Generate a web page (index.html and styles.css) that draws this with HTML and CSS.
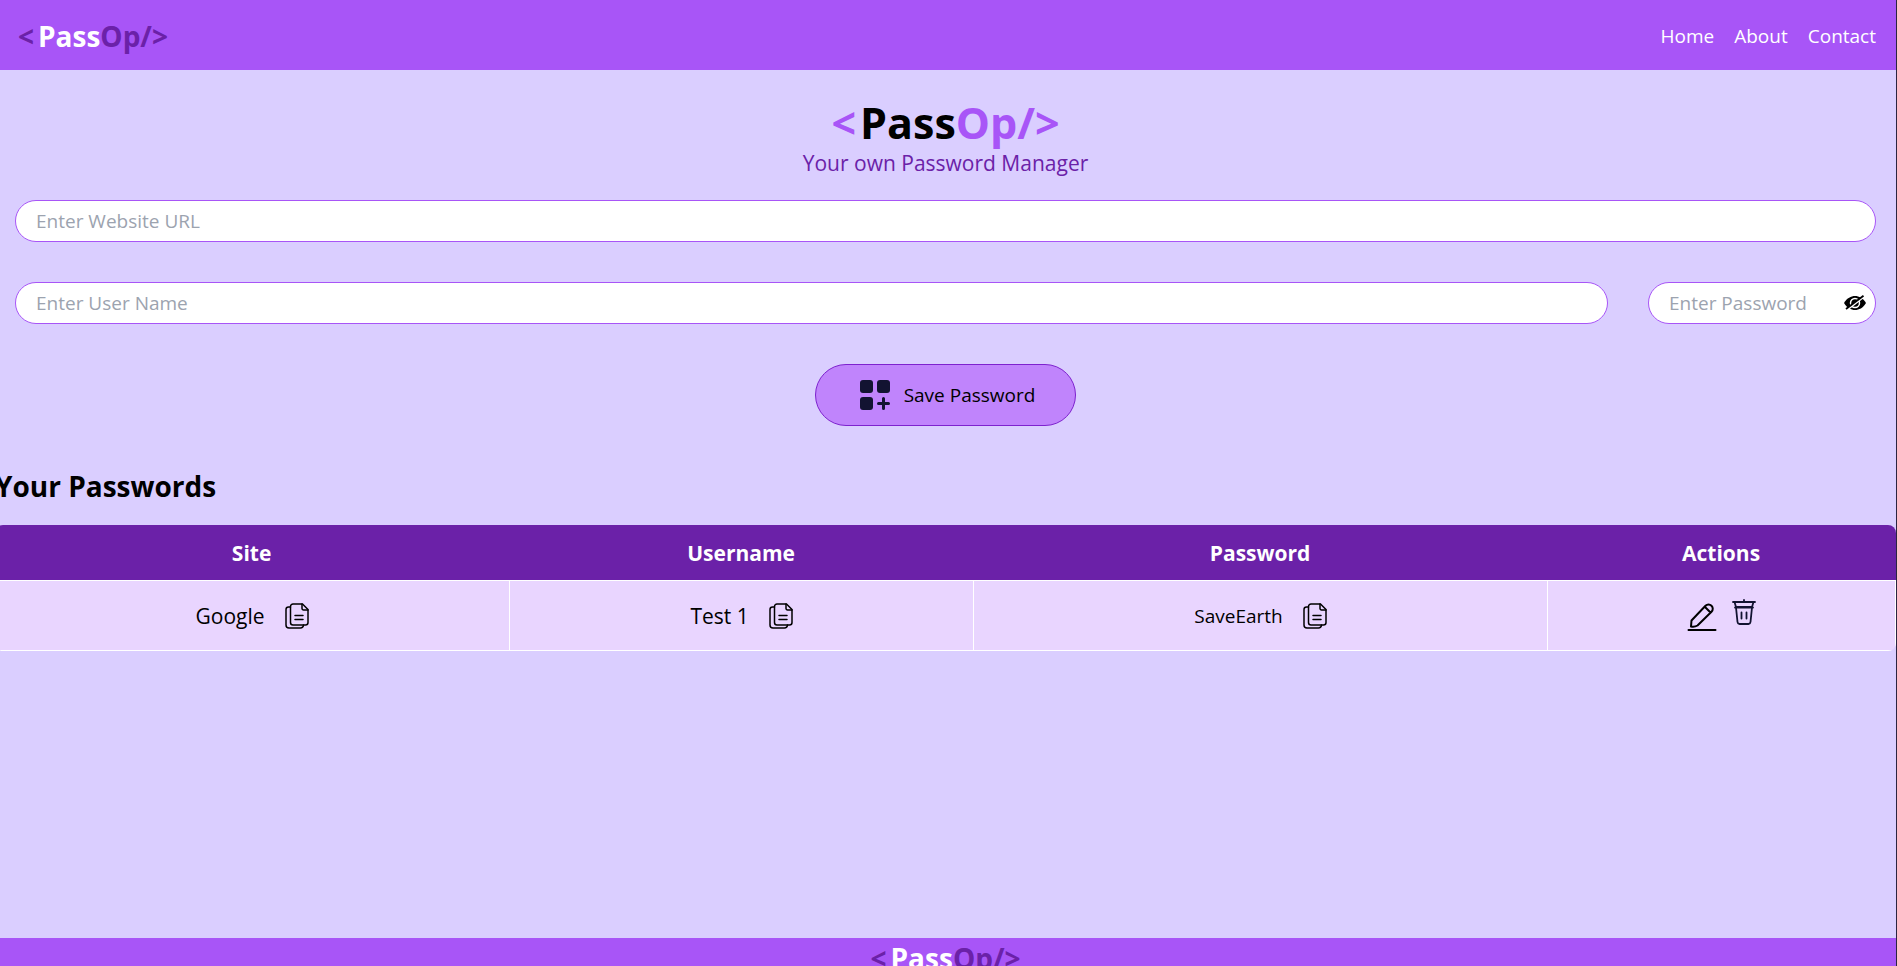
FILE: index.html
```html
<!DOCTYPE html>
<html lang="en">
<head>
<meta charset="utf-8">
<title>PassOp</title>
<link rel="stylesheet" href="styles.css">
</head>
<body>
<svg class="sprite" aria-hidden="true">
  <symbol id="copy" viewBox="0 0 24 26">
    <g fill="none" stroke="currentColor" stroke-width="1.5" stroke-linejoin="round" stroke-linecap="round">
      <path d="M8 1h9.500l5.500 5.500v13a2.500 2.500 0 0 1-2.500 2.500H8a2.500 2.500 0 0 1-2.500-2.500v-16A2.500 2.500 0 0 1 8 1z"/>
      <path d="M17 1v4.500a1.500 1.500 0 0 0 1.500 1.500H23M5.500 4H3.500A2.500 2.500 0 0 0 1 6.500V22a3 3 0 0 0 3 3h11.500a3 3 0 0 0 3-3M10 12.500h8M10 16.500h8"/>
    </g>
  </symbol>
</svg>
<div class="page">
  <nav class="navbar">
    <div class="logo"><span class="deep">&lt;</span><span class="name">Pass</span><span class="deep">Op/&gt;</span></div>
    <ul class="links">
      <li><a href="#">Home</a></li>
      <li><a href="#">About</a></li>
      <li><a href="#">Contact</a></li>
    </ul>
  </nav>
  <main class="main">
    <header class="hero">
      <h1 class="title"><span class="accent">&lt;</span><span class="name">Pass</span><span class="accent">Op/&gt;</span></h1>
      <p class="tagline">Your own Password Manager</p>
    </header>
    <form class="form">
      <input class="field" type="text" placeholder="Enter Website URL" aria-label="Website URL">
      <div class="row">
        <input class="field" type="text" placeholder="Enter User Name" aria-label="User name">
        <div class="secret">
          <input class="field" type="password" placeholder="Enter Password" aria-label="Password">
          <button class="eye" type="button" aria-label="Show password">
            <svg width="22" height="16" viewBox="0 0 22 16"><path d="M0 8C3 3 7 1 11 1s8 2 11 7c-3 5-7 7-11 7S3 13 0 8z"/><circle cx="11" cy="8" r="4.500" fill="none" stroke="#fff" stroke-width="1.500"/><path d="M2 15.500 19.500 2" stroke="#fff" stroke-width="2.200"/><path d="M2 14 19.500 0.800" stroke="#000" stroke-width="1.800"/></svg>
          </button>
        </div>
      </div>
      <button class="save" type="button">
        <svg width="30" height="30" viewBox="0 0 30 30" fill="#121331"><rect width="13" height="13" rx="3"/><rect x="17" width="13" height="13" rx="3"/><rect y="17" width="13" height="13" rx="3"/><path d="M23.500 18.500v10M18.500 23.500h10" stroke="#121331" stroke-width="3" stroke-linecap="round"/></svg>
        Save Password
      </button>
    </form>
    <section>
      <h2 class="heading">Your Passwords</h2>
      <table class="table">
        <colgroup><col class="c-site"><col class="c-user"><col class="c-pass"><col class="c-act"></colgroup>
        <thead><tr><th>Site</th><th>Username</th><th>Password</th><th>Actions</th></tr></thead>
        <tbody><tr>
          <td><div class="cell"><a href="#">Google</a><button type="button" aria-label="Copy site"><svg width="24" height="26"><use href="#copy"/></svg></button></div></td>
          <td><div class="cell"><span>Test 1</span><button type="button" aria-label="Copy username"><svg width="24" height="26"><use href="#copy"/></svg></button></div></td>
          <td><div class="cell small"><span>SaveEarth</span><button type="button" aria-label="Copy password"><svg width="24" height="26"><use href="#copy"/></svg></button></div></td>
          <td><div class="cell actions">
            <button type="button" aria-label="Edit"><svg width="30" height="34" viewBox="0 0 30 34" fill="none" stroke="#000" stroke-width="2" stroke-linecap="round" stroke-linejoin="round"><path d="M4 27.500l.5-6L18.500 6.800a4.200 4.200 0 0 1 6 0 4.200 4.200 0 0 1 0 6L10.500 26.500q-3 1.800-6.500 1z M18 8l5.500 5.500M1.500 31h27"/></svg></button>
            <button type="button" aria-label="Delete"><svg width="24" height="34" viewBox="0 0 24 34" fill="none" stroke="#121331" stroke-width="1.800" stroke-linecap="round" stroke-linejoin="round"><path d="M1 3h22M12 .9v2M2.500 3l1.500 5h16l1.500-5M3 8.500h18M4 8.500l1.500 14.500a2.200 2.200 0 0 0 2 2h9a2.200 2.200 0 0 0 2-2L20 8.500M9.500 13.500v6M14.500 13.500v6"/></svg></button>
          </div></td>
        </tr></tbody>
      </table>
    </section>
  </main>
  <footer class="footer">
    <div class="logo"><span class="deep">&lt;</span><span class="name">Pass</span><span class="deep">Op/&gt;</span></div>
  </footer>
</div>
</body>
</html>
```
FILE: styles.css
```css
* { box-sizing: border-box; }
html { background: #daceff; }
body {
  margin: 0;
  height: 100vh;
  overflow: hidden;
  font-family: "Open Sans", "Noto Sans", sans-serif;
  font-size: 19px;
  line-height: 30px;
  color: #000;
}
.sprite { display: none; }
h1, h2, p, ul { margin: 0; padding: 0; }
button {
  margin: 0;
  padding: 0;
  border: 0;
  background: none;
  font: inherit;
  color: inherit;
  cursor: pointer;
}
svg { display: block; }
a { color: inherit; text-decoration: none; }
.page { margin-left: -5px; border-right: 1px solid #2b2440; }
.navbar {
  display: flex;
  justify-content: space-between;
  align-items: center;
  height: 70px;
  padding: 2px 20px 0 23px;
  background: #a855f7;
  color: #fff;
}
.logo {
  display: flex;
  font-size: 28px;
  line-height: 40px;
  font-weight: 700;
  color: #fff;
}
.name { margin-left: 4px; }
.deep { color: #6b21a8; }
.accent { color: #a855f7; }
.links { display: flex; gap: 20px; list-style: none; }
.main { min-height: calc(100vh - 97px - 1px); }
.hero { padding-top: 28px; text-align: center; }
.title {
  display: flex;
  justify-content: center;
  font-size: 43px;
  line-height: 50px;
  font-weight: 700;
}
.tagline { font-size: 21px; line-height: 30px; color: #6b21a8; }
.form {
  display: flex;
  flex-direction: column;
  align-items: center;
  gap: 40px;
  padding: 22px 20px 0;
}
.row { display: flex; gap: 40px; width: 100%; }
.field {
  display: block;
  width: 100%;
  min-width: 0;
  height: 42px;
  padding: 4px 20px;
  border: 1px solid #a855f7;
  border-radius: 21px;
  background: #fff;
  font: inherit;
  color: #000;
}
.field::placeholder { color: #9ca3af; opacity: 1; }
.secret { position: relative; flex: 0 0 228px; }
.eye { position: absolute; right: 10px; top: 13px; }
.save {
  display: flex;
  align-items: center;
  gap: 14px;
  height: 62px;
  padding: 0 40px 0 44px;
  border: 1px solid #7e22ce;
  border-radius: 31px;
  background: #c084fc;
}
.heading { padding: 39px 0 18px; font-size: 28px; line-height: 42px; font-weight: 700; }
.table {
  width: 100%;
  table-layout: fixed;
  border-collapse: separate;
  border-spacing: 0;
  border-radius: 8px;
  overflow: hidden;
}
.c-site { width: 27.1%; }
.c-user { width: 24.4%; }
.c-pass { width: 30.2%; }
.c-act { width: 18.3%; }
th { height: 55px; padding: 0 2px 0 0; background: #6b21a8; color: #fff; font-size: 21px; }
td {
  height: 71px;
  padding: 0;
  border: 1px solid #fff;
  border-left: 0;
  background: #e9d5ff;
}
.cell { display: flex; align-items: center; justify-content: center; gap: 20px; font-size: 21px; }
.small { font-size: 19px; }
.actions { gap: 15px; }
.footer { display: flex; justify-content: center; height: 70px; background: #a855f7; }
```
